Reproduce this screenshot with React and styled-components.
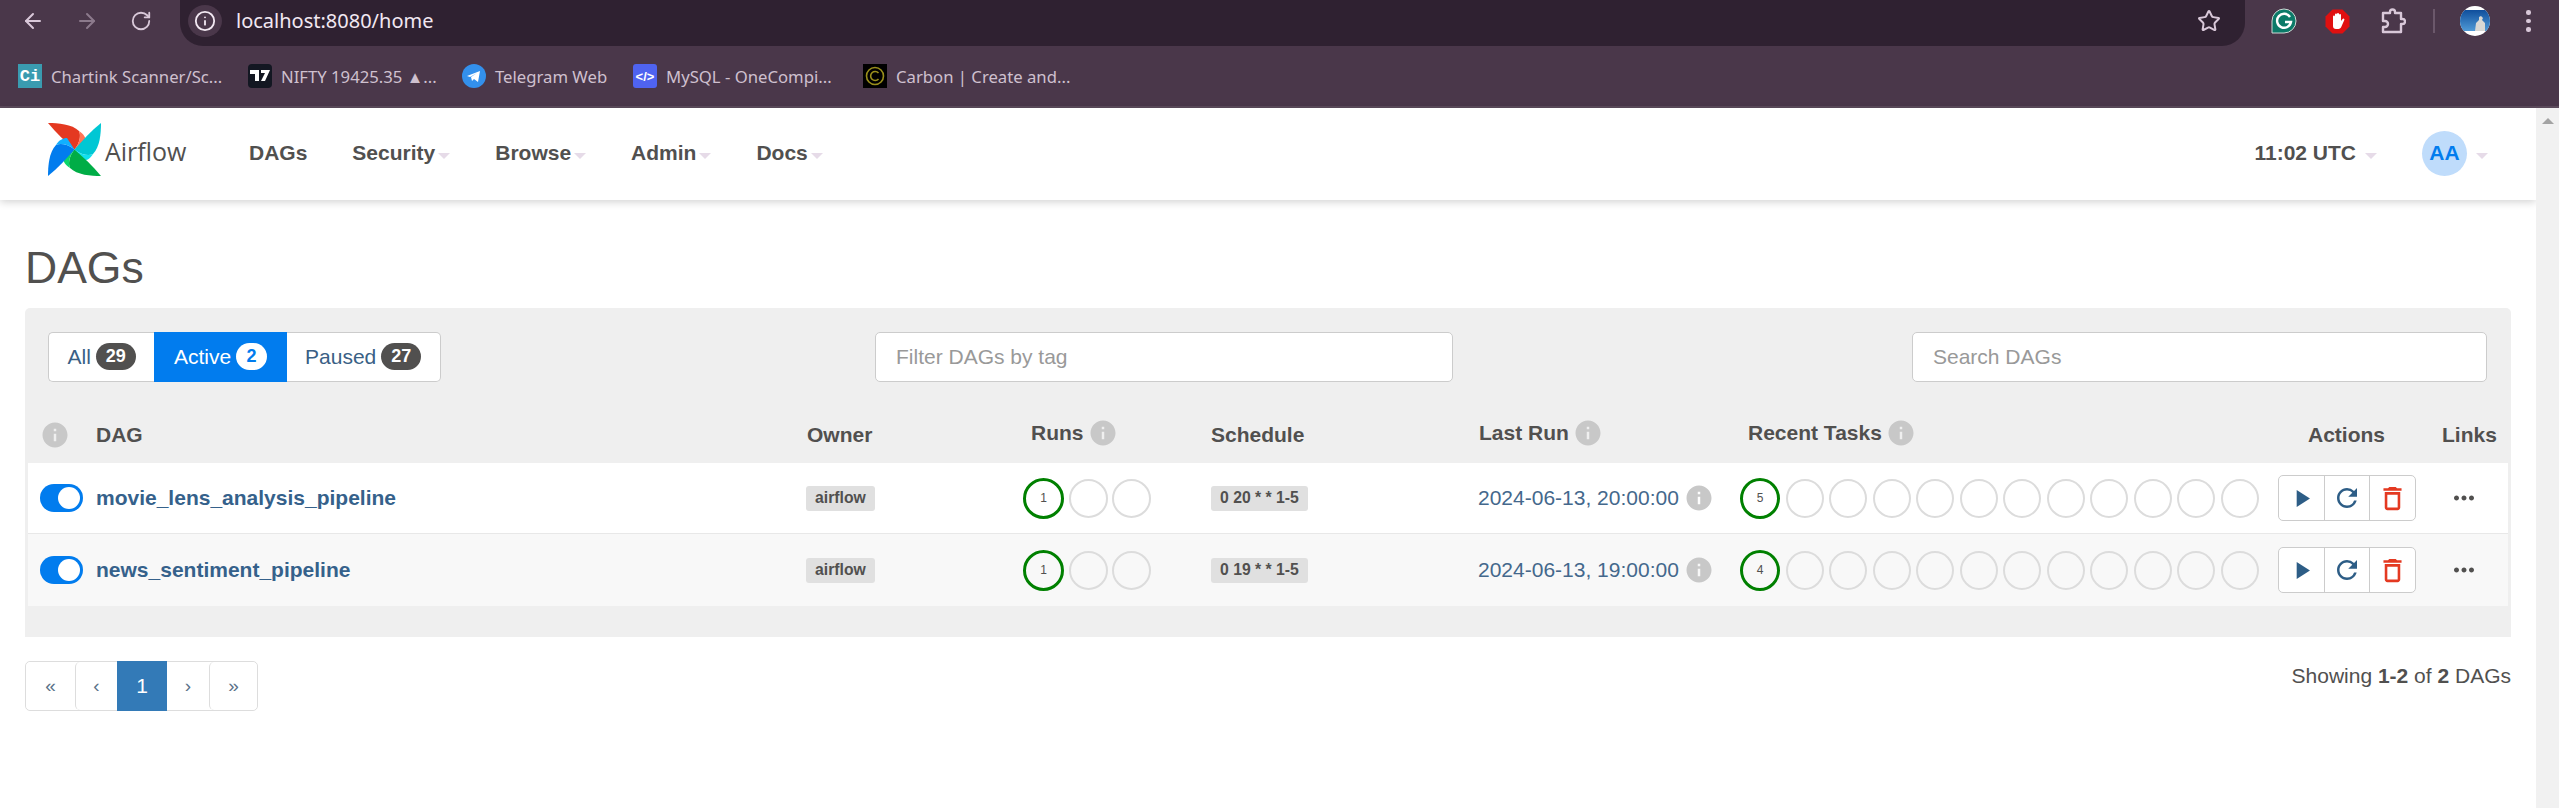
import React from 'react'
import styled, { createGlobalStyle } from 'styled-components'
import { ArrowLeft, ArrowRight, RotateCw, Star, Info } from 'lucide-react'
import { MdPlayArrow, MdRefresh, MdDeleteOutline, MdMoreHoriz, MdInfo } from 'react-icons/md'

const GlobalStyle = createGlobalStyle`
  html, body { margin: 0; padding: 0; height: 808px; overflow: hidden; background: #fff; }
  body { font-family: "Liberation Sans", Arial, sans-serif; font-size: 21px; color: #51504f; }
  * { box-sizing: border-box; }
`

const Toolbar = styled.div`
  height: 60px;
  background: #4a374a;
  display: flex;
  align-items: flex-start;
  color: #d9c8d9;
`
const NavIcons = styled.div`
  width: 180px;
  height: 46px;
  padding: 0 0 4px 21px;
  display: flex;
  align-items: center;
  gap: 30px;
`
const NavIcon = styled.span`
  display: flex;
  width: 24px;
  justify-content: center;
  color: ${p => (p.$off ? '#8c7a8c' : '#d9c8d9')};
`
const UrlPill = styled.div`
  flex: 0 0 2065px;
  height: 46px;
  background: #2f2131;
  border-radius: 0 0 23px 23px;
  display: flex;
  align-items: center;
  padding: 0 24px 4px 8px;
`
const SiteInfo = styled.span`
  width: 34px;
  height: 32px;
  border-radius: 50%;
  background: #4a374a;
  display: flex;
  align-items: center;
  justify-content: center;
  margin-right: 14px;
`
const UrlText = styled.span`
  font-family: "Noto Sans", sans-serif;
  font-size: 20px;
  color: #f2e8f2;
  flex: 1;
  margin-top: -2px;
`
const Extensions = styled.div`
  flex: 1;
  height: 46px;
  display: flex;
  align-items: center;
  padding: 0 0 4px 26px;
`
const ExtensionSlot = styled.span`
  display: flex;
  margin-right: ${p => p.$gap};
`
const Separator = styled.span`
  width: 2px;
  height: 24px;
  background: #6b586b;
  margin: 0 25px 0 27px;
`
const Dots = styled.span`
  display: flex;
  flex-direction: column;
  gap: 4px;
  margin-left: 36px;
  i { width: 4.5px; height: 4.5px; border-radius: 50%; background: #d9c8d9; }
`

const BookmarkBar = styled.div`
  height: 48px;
  background: #4a374a;
  border-bottom: 2px solid #5c4b5c;
  display: flex;
  align-items: flex-start;
  padding: 4px 0 0 18px;
  gap: 25px;
`
const Bookmark = styled.div`
  display: flex;
  flex: none;
  width: ${p => p.$w};
  align-items: center;
  gap: 9px;
  height: 24px;
  font-family: "Noto Sans", sans-serif;
  font-size: 16.7px;
  color: #cfc0cf;
  white-space: nowrap;
`
const Favicon = styled.span`
  width: 24px;
  height: 24px;
  flex: none;
  display: flex;
  align-items: center;
  justify-content: center;
  background: ${p => p.$bg};
  color: ${p => p.$color || '#fff'};
  border-radius: ${p => p.$radius || '0'};
  font-family: ${p => p.$mono ? '"Liberation Mono", monospace' : '"Liberation Sans", sans-serif'};
  font-weight: 700;
  font-size: ${p => p.$size || '14px'};
`

const Body = styled.div`
  height: 700px;
  display: flex;
`
const Page = styled.div`
  flex: 1;
  min-width: 0;
`
const Scrollbar = styled.div`
  width: 23px;
  background: #f1f1f1;
  display: flex;
  justify-content: center;
  padding-top: 10px;
`
const ScrollUp = styled.span`
  width: 0;
  height: 0;
  border-left: 6px solid transparent;
  border-right: 6px solid transparent;
  border-bottom: 6px solid #a3a3a3;
`

const Nav = styled.nav`
  height: 92px;
  background: #fff;
  box-shadow: 0 2px 8px rgba(0, 0, 0, 0.18);
  display: flex;
  align-items: center;
  padding: 0 48px 2px 48px;
`
const Brand = styled.div`
  display: flex;
  align-items: center;
  gap: 4px;
  width: 201px;
  margin-top: -8px;
`
const BrandName = styled.span`
  font-family: "Open Sans", sans-serif;
  font-size: 25px;
  color: #51504f;
  margin-top: 4px;
`
const Menu = styled.div`
  display: flex;
  align-items: center;
  gap: 45px;
  flex: 1;
`
const MenuItem = styled.span`
  font-weight: 700;
  font-size: 21px;
  color: #51504f;
  display: flex;
  align-items: center;
`
const Caret = styled.span`
  width: 0;
  height: 0;
  margin: 5px 0 0 3px;
  border-left: 6px solid transparent;
  border-right: 6px solid transparent;
  border-top: 6px solid #e6dbe8;
`
const NavRight = styled.div`
  display: flex;
  align-items: center;
`
const Clock = styled.span`
  font-weight: 700;
  font-size: 21px;
  color: #51504f;
  margin-right: 6px;
`
const UserBadge = styled.span`
  width: 45px;
  height: 45px;
  border-radius: 50%;
  background: #bfdcfb;
  color: #017cee;
  font-weight: 700;
  font-size: 21px;
  display: flex;
  align-items: center;
  justify-content: center;
  margin: 0 6px 0 45px;
`

const Content = styled.main`
  padding: 38px 25px 0 25px;
`
const Title = styled.h1`
  margin: 0 0 10px;
  font-weight: 400;
  font-size: 44.5px;
  line-height: 60px;
  color: #51504f;
`
const Panel = styled.section`
  height: 329px;
  background: #efefef;
  border-radius: 5px 5px 0 0;
  padding: 24px 3px 0;
`
const Filters = styled.div`
  display: grid;
  grid-template-columns: 827px 578px 1fr;
  padding: 0 21px 0 20px;
  height: 50px;
`
const Tabs = styled.div`
  display: flex;
  justify-self: start;
  height: 50px;
`
const Tab = styled.span`
  display: flex;
  align-items: center;
  gap: 5px;
  height: 50px;
  padding: 0 18.5px;
  background: ${p => (p.$active ? '#017cee' : '#fff')};
  color: ${p => (p.$active ? '#fff' : '#3a5f85')};
  border: 1px solid ${p => (p.$active ? '#017cee' : '#ccc')};
  &:first-child { border-radius: 5px 0 0 5px; border-right: 0; }
  &:last-child { border-radius: 0 5px 5px 0; border-left: 0; }
`
const Count = styled.b`
  min-width: 31px;
  height: 27px;
  padding: 0 10px;
  margin-top: -1px;
  border-radius: 14px;
  background: ${p => (p.$active ? '#fff' : '#51504f')};
  color: ${p => (p.$active ? '#017cee' : '#fff')};
  font-size: 18px;
  display: flex;
  align-items: center;
  justify-content: center;
`
const Field = styled.input`
  width: ${p => p.$w};
  height: 50px;
  padding: 0 20px;
  background: #fff;
  border: 1px solid #ccc;
  border-radius: 5px;
  font-family: inherit;
  font-size: 21px;
  justify-self: ${p => p.$end ? 'end' : 'start'};
  &::placeholder { color: #999; opacity: 1; }
`

const columns = '68px 711px 216px 188px 268px 261px 538px 138px 1fr'
const HeadRow = styled.div`
  display: grid;
  grid-template-columns: ${columns};
  height: 81px;
  padding-top: 24px;
  align-items: center;
`
const HeadCell = styled.span`
  display: flex;
  align-items: center;
  gap: 4px;
  font-weight: 700;
  font-size: 21px;
  color: #51504f;
  white-space: nowrap;
  padding-left: ${p => p.$indent || '0'};
  margin-top: ${p => p.$up ? '-3px' : '0'};
`
const Row = styled.div`
  display: grid;
  grid-template-columns: ${columns};
  align-items: center;
  height: 71px;
  background: ${p => (p.$alt ? '#f8f8f8' : '#fff')};
  border-bottom: ${p => (p.$alt ? '0' : '1px solid #e8e8e8')};
  & + & { height: 72px; }
`
const Toggle = styled.span`
  width: 43px;
  height: 28px;
  margin-left: 12px;
  border-radius: 14px;
  background: #017cee;
  display: flex;
  justify-content: flex-end;
  align-items: center;
  padding-right: 3px;
  i { width: 22px; height: 22px; border-radius: 50%; background: #fff; }
`
const DagName = styled.a`
  font-weight: 700;
  font-size: 21px;
  color: #35618b;
`
const Pill = styled.span`
  justify-self: start;
  height: 25px;
  padding: 0 9px;
  border-radius: 3px;
  background: #e0e0e0;
  color: #51504f;
  font-weight: 700;
  font-size: 15.75px;
  display: flex;
  align-items: center;
  margin-left: ${p => p.$ml || '0'};
`
const Circles = styled.div`
  display: flex;
  align-items: center;
  gap: ${p => p.$gap};
`
const RunDot = styled.span`
  flex: none;
  width: ${p => p.$w};
  height: ${p => (p.$on ? '41px' : '39px')};
  border-radius: 50%;
  border: ${p => (p.$on ? '3px solid #008000' : '2px solid #dcdcdc')};
  display: flex;
  align-items: center;
  justify-content: center;
  font-size: 12px;
  color: #51504f;
`
const LastRun = styled.span`
  display: flex;
  align-items: center;
  gap: 5px;
  color: #44688c;
  white-space: nowrap;
  margin-left: -1px;
`
const ActionGroup = styled.div`
  display: flex;
  height: 46px;
  border: 1px solid #ccc;
  border-radius: 5px;
  background: #fff;
`
const ActionButton = styled.span`
  flex: 1;
  display: flex;
  align-items: center;
  justify-content: center;
  color: ${p => p.$color || '#2d5d86'};
  border-left: ${p => (p.$first ? '0' : '1px solid #ccc')};
`
const LinkCell = styled.span`
  display: flex;
  margin-left: 33px;
  color: #51504f;
`
const Footer = styled.div`
  display: flex;
  justify-content: space-between;
  align-items: flex-start;
  margin-top: 24px;
`
const Pagination = styled.div`
  display: flex;
  height: 50px;
  border: 1px solid #ddd;
  border-radius: 5px;
`
const PageItem = styled.span`
  width: ${p => p.$w};
  margin: ${p => (p.$active ? '-1px 0' : '0')};
  display: flex;
  align-items: center;
  justify-content: center;
  font-size: ${p => (p.$active ? '21px' : '19px')};
  background: ${p => (p.$active ? '#337ab7' : '#fff')};
  color: ${p => (p.$active ? '#fff' : '#5b7289')};
  border-left: ${p => (p.$line ? '1px solid #ddd' : '0')};
  border-radius: ${p => (p.$active ? '0' : '5px')};
`
const Showing = styled.span`
  margin-top: 3px;
  color: #51504f;
`

const infoGrey = '#c8c8c8'

function Logo() {
  const blades = [
    ['#e43921', '#ff7557', 0],
    ['#00c7d4', '#11e1ee', 90],
    ['#00ad46', '#0cd66a', 180],
    ['#017cee', '#11b0ff', 270],
  ]
  return (
    <svg width="53" height="53" viewBox="0 0 53 53">
      {blades.map(([dark, light, deg]) => (
        <g key={deg} transform={`rotate(${deg} 26.5 26.5)`}>
          <path d="M0 0C10 0 24 1 31 8C33 12 32 20 26.5 26.5C18 19 8 10 0 0Z" fill={dark} />
          <path d="M31 8C36 11 38 15 38 19L26.5 26.5C32 20 33 12 31 8Z" fill={light} />
        </g>
      ))}
    </svg>
  )
}

function Grammarly() {
  return (
    <svg width="26" height="26" viewBox="0 0 26 26">
      <path d="M13 1a12 12 0 1 1 0 24H1V13A12 12 0 0 1 13 1Z" fill="#0b7a68" stroke="#cfd8d5" strokeWidth="1" />
      <path d="M19 9a7 7 0 1 0 1 5h-6" fill="none" stroke="#fff" strokeWidth="2.4" />
    </svg>
  )
}

function AdBlock() {
  return (
    <svg width="25" height="25" viewBox="0 0 25 25">
      <path d="M7.5 0.5h10l7 7v10l-7 7h-10l-7-7v-10z" fill="#e01010" />
      <path d="M8 12V7.5a1 1 0 0 1 2 0V5.5a1 1 0 0 1 2 0V5a1 1 0 0 1 2 0v1a1 1 0 0 1 2 0v6l1.6-2a1 1 0 0 1 1.6 1.2L16 18.5a3 3 0 0 1-2.5 1.5H11a3 3 0 0 1-3-3z" fill="#fff" />
    </svg>
  )
}

function PuzzlePiece() {
  return (
    <svg width="26" height="26" viewBox="0 0 26 26" fill="none" stroke="#d9c8d9" strokeWidth="2.4" strokeLinejoin="round">
      <path d="M3 5h7V4a2.5 2.5 0 0 1 5 0v1h6v6h1.5a2.5 2.5 0 0 1 0 5H21v8H3v-5h2a3 3 0 0 0 0-6H3z" />
    </svg>
  )
}

function ProfilePhoto() {
  return (
    <svg width="30" height="30" viewBox="0 0 30 30">
      <defs>
        <clipPath id="photo"><circle cx="15" cy="15" r="15" /></clipPath>
        <linearGradient id="sky" x1="0" y1="0" x2="0" y2="1">
          <stop offset="0" stopColor="#0f4e9c" />
          <stop offset="1" stopColor="#4f9ad6" />
        </linearGradient>
      </defs>
      <g clipPath="url(#photo)">
        <rect width="30" height="30" fill="#fff" />
        <rect y="4" width="30" height="21" fill="url(#sky)" />
        <path d="M15 25l1-8 3-3v-3l2-1 2 2-1 2 3 3v8z" fill="#d8d8d4" />
      </g>
    </svg>
  )
}

function TradingViewMark() {
  return (
    <svg width="20" height="12" viewBox="0 0 20 12" fill="#fff">
      <path d="M0 0h9v11H5V4H0zM11 0h9l-5 11h-4l4-8h-4z" />
    </svg>
  )
}

function TelegramMark() {
  return (
    <svg width="24" height="24" viewBox="0 0 24 24">
      <circle cx="12" cy="12" r="12" fill="#3390ec" />
      <path d="M5 12l13-5-2 11-4-3-2 2-1-4 6-4-7 4z" fill="#fff" />
    </svg>
  )
}

function CarbonMark() {
  return (
    <svg width="20" height="20" viewBox="0 0 20 20" fill="none" stroke="#9a8f1c" strokeWidth="1.6">
      <circle cx="10" cy="10" r="8.5" />
      <path d="M13.5 7a4.5 4.5 0 1 0 0 6" />
    </svg>
  )
}

function Dot({ n, w }) {
  return <RunDot $w={w} $on={n !== undefined}>{n}</RunDot>
}

function DagRow({ name, schedule, lastRun, runs, tasks, alt }) {
  return (
    <Row $alt={alt}>
      <Toggle><i /></Toggle>
      <DagName>{name}</DagName>
      <Pill $ml="-1px">airflow</Pill>
      <Circles $gap="4.5px">
        <Dot n={runs} w="41px" />
        <Dot w="39px" />
        <Dot w="39px" />
      </Circles>
      <Pill>{schedule}</Pill>
      <LastRun>{lastRun}<MdInfo size={30} color={infoGrey} /></LastRun>
      <Circles $gap="5.5px">
        <Dot n={tasks} w="40px" />
        {Array.from({ length: 11 }).map((_, i) => <Dot key={i} w="38px" />)}
      </Circles>
      <ActionGroup>
        <ActionButton $first><MdPlayArrow size={29} /></ActionButton>
        <ActionButton><MdRefresh size={30} /></ActionButton>
        <ActionButton $color="#e43921"><MdDeleteOutline size={31} /></ActionButton>
      </ActionGroup>
      <LinkCell><MdMoreHoriz size={30} /></LinkCell>
    </Row>
  )
}

export default function App() {
  return (
    <>
      <GlobalStyle />
      <Toolbar>
        <NavIcons>
          <NavIcon><ArrowLeft size={24} strokeWidth={2} /></NavIcon>
          <NavIcon $off><ArrowRight size={24} strokeWidth={2} /></NavIcon>
          <NavIcon><RotateCw size={22} strokeWidth={2} /></NavIcon>
        </NavIcons>
        <UrlPill>
          <SiteInfo><Info size={22} color="#f2e8f2" strokeWidth={2} /></SiteInfo>
          <UrlText>localhost:8080/home</UrlText>
          <Star size={24} color="#d9c8d9" strokeWidth={2} />
        </UrlPill>
        <Extensions>
          <ExtensionSlot $gap="28px"><Grammarly /></ExtensionSlot>
          <ExtensionSlot $gap="30px"><AdBlock /></ExtensionSlot>
          <PuzzlePiece />
          <Separator />
          <ProfilePhoto />
          <Dots><i /><i /><i /></Dots>
        </Extensions>
      </Toolbar>
      <BookmarkBar>
        <Bookmark $w="205px"><Favicon $bg="#3a9bb0" $mono $size="17px">Ci</Favicon>Chartink Scanner/Sc...</Bookmark>
        <Bookmark $w="189px"><Favicon $bg="#131722" $radius="4px"><TradingViewMark /></Favicon>NIFTY 19425.35 ▲...</Bookmark>
        <Bookmark $w="146px"><Favicon $bg="transparent"><TelegramMark /></Favicon>Telegram Web</Bookmark>
        <Bookmark $w="205px"><Favicon $bg="#4f63f0" $radius="3px" $size="13px">&lt;/&gt;</Favicon>MySQL - OneCompi...</Bookmark>
        <Bookmark $w="182px"><Favicon $bg="#000"><CarbonMark /></Favicon>Carbon | Create and...</Bookmark>
      </BookmarkBar>
      <Body>
        <Page>
          <Nav>
            <Brand><Logo /><BrandName>Airflow</BrandName></Brand>
            <Menu>
              <MenuItem>DAGs</MenuItem>
              <MenuItem>Security<Caret /></MenuItem>
              <MenuItem>Browse<Caret /></MenuItem>
              <MenuItem>Admin<Caret /></MenuItem>
              <MenuItem>Docs<Caret /></MenuItem>
            </Menu>
            <NavRight>
              <Clock>11:02 UTC</Clock>
              <Caret />
              <UserBadge>AA</UserBadge>
              <Caret />
            </NavRight>
          </Nav>
          <Content>
            <Title>DAGs</Title>
            <Panel>
              <Filters>
                <Tabs>
                  <Tab>All<Count>29</Count></Tab>
                  <Tab $active>Active<Count $active>2</Count></Tab>
                  <Tab>Paused<Count>27</Count></Tab>
                </Tabs>
                <Field $w="578px" placeholder="Filter DAGs by tag" />
                <Field $w="575px" $end placeholder="Search DAGs" />
              </Filters>
              <HeadRow>
                <MdInfo size={30} color={infoGrey} style={{ marginLeft: 12 }} />
                <HeadCell>DAG</HeadCell>
                <HeadCell>Owner</HeadCell>
                <HeadCell $up $indent="8px">Runs<MdInfo size={30} color={infoGrey} /></HeadCell>
                <HeadCell>Schedule</HeadCell>
                <HeadCell $up>Last Run<MdInfo size={30} color={infoGrey} /></HeadCell>
                <HeadCell $up $indent="8px">Recent Tasks<MdInfo size={30} color={infoGrey} /></HeadCell>
                <HeadCell $indent="30px">Actions</HeadCell>
                <HeadCell $indent="26px">Links</HeadCell>
              </HeadRow>
              <DagRow name="movie_lens_analysis_pipeline" schedule="0 20 * * 1-5" lastRun="2024-06-13, 20:00:00" runs={1} tasks={5} />
              <DagRow alt name="news_sentiment_pipeline" schedule="0 19 * * 1-5" lastRun="2024-06-13, 19:00:00" runs={1} tasks={4} />
            </Panel>
            <Footer>
              <Pagination>
                <PageItem $w="49px">«</PageItem>
                <PageItem $w="42px" $line>‹</PageItem>
                <PageItem $w="50px" $active>1</PageItem>
                <PageItem $w="42px">›</PageItem>
                <PageItem $w="48px" $line>»</PageItem>
              </Pagination>
              <Showing>Showing <b>1-2</b> of <b>2</b> DAGs</Showing>
            </Footer>
          </Content>
        </Page>
        <Scrollbar><ScrollUp /></Scrollbar>
      </Body>
    </>
  )
}
